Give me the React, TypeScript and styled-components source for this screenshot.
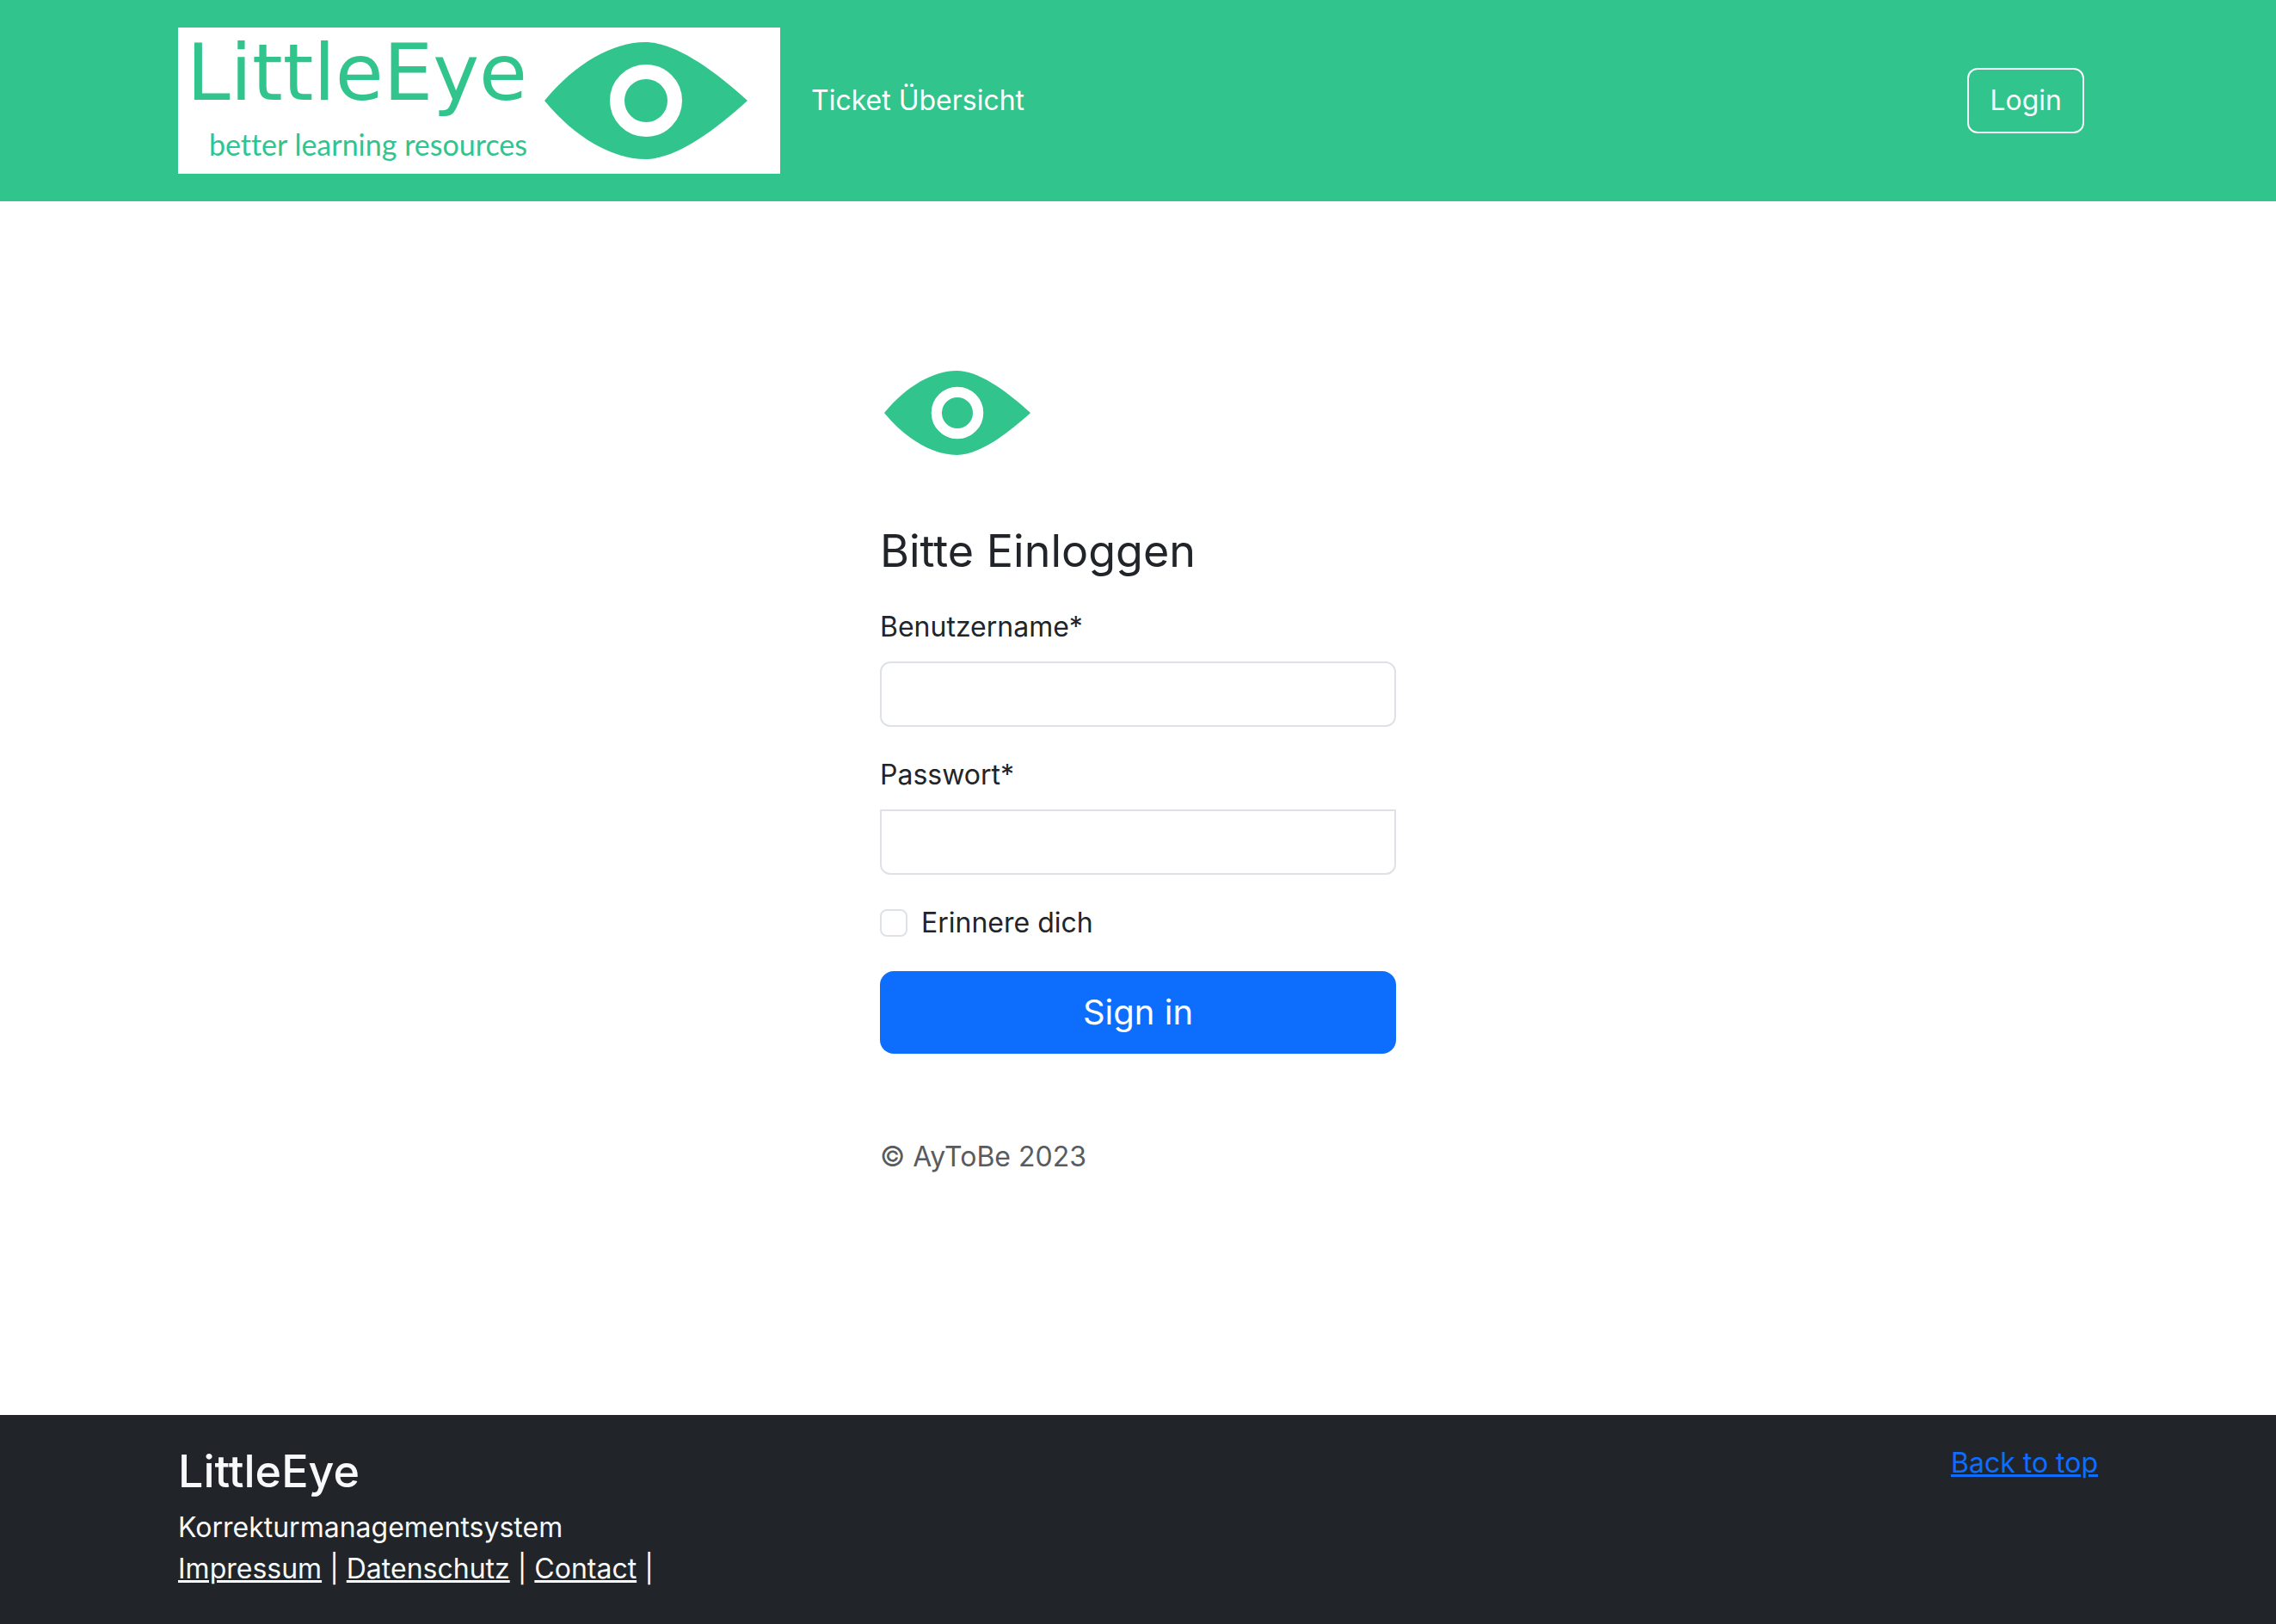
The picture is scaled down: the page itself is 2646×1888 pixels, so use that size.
import React from "react";
import styled, { createGlobalStyle } from "styled-components";

const GREEN = "#31c48d";

const GlobalStyle = createGlobalStyle`
  *, *::before, *::after { box-sizing: border-box; }
  body {
    margin: 0;
    background: #fff;
    color: #212529;
    font-family: Inter, "Liberation Sans", sans-serif;
    font-size: 32px;
    line-height: 48px;
  }
`;

const Page = styled.div`
  display: flex;
  flex-direction: column;
  min-height: 100vh;
`;

const Container = styled.div`
  display: flex;
  width: 100%;
  max-width: 2280px;
  margin: 0 auto;
  padding: 0 24px;
`;

const Header = styled.header`
  padding: 32px 0;
  background: ${GREEN};
`;

const HeaderRow = styled(Container)`
  align-items: center;
`;

const Brand = styled.a`
  display: flex;
  align-items: center;
  gap: 20px;
  width: 700px;
  height: 170px;
  padding: 0 38px 0 20px;
  justify-content: flex-end;
  background: #fff;
  color: ${GREEN};
  text-decoration: none;
`;

const BrandText = styled.span`
  display: flex;
  flex-direction: column;
  align-items: flex-end;
  gap: 16px;
  white-space: nowrap;
`;

const BrandName = styled.span`
  font-family: "DejaVu Sans", sans-serif;
  font-size: 91px;
  line-height: 86px;
`;

const BrandTagline = styled.span`
  font-family: Lato, sans-serif;
  font-size: 34px;
  line-height: 48px;
  font-variant-ligatures: none;
`;

const EyeSvg = styled.svg<{ $width: number }>`
  display: block;
  flex: none;
  width: ${(p) => p.$width}px;
  height: auto;
`;

const Nav = styled.nav`
  flex: 1;
  padding: 0 36px;
`;

const NavLink = styled.a`
  color: #fff;
  text-decoration: none;
`;

const LoginButton = styled.button`
  margin-right: 16px;
  padding: 12px 24px;
  border: 2px solid #f8f9fa;
  border-radius: 12px;
  background: transparent;
  color: #f8f9fa;
  font: inherit;
`;

const Main = styled.main`
  flex: 1;
  padding: 197px 24px 96px;
`;

const Form = styled.form`
  display: flex;
  flex-direction: column;
  width: 100%;
  max-width: 600px;
  margin: 0 auto;
`;

const FormLogo = styled.div`
  padding: 0 5px;
  margin-bottom: 80px;
`;

const Title = styled.h1`
  margin: 0 0 32px;
  font-size: 52px;
  font-weight: 400;
  line-height: 64px;
`;

const Field = styled.div`
  display: flex;
  flex-direction: column;
  gap: 16px;
  margin-bottom: 32px;
`;

const TextInput = styled.input<{ $squareTop?: boolean }>`
  width: 100%;
  height: 76px;
  padding: 12px 24px;
  border: 2px solid #dee2e6;
  border-radius: ${(p) => (p.$squareTop ? "0 0 12px 12px" : "12px")};
  background: #fff;
  color: inherit;
  font: inherit;
`;

const CheckRow = styled.div`
  display: flex;
  align-items: center;
  gap: 16px;
  margin-bottom: 32px;
`;

const Checkbox = styled.input`
  appearance: none;
  width: 32px;
  height: 32px;
  margin: 0;
  border: 2px solid #dee2e6;
  border-radius: 8px;
  background: #fff;
  &:checked { background: #0d6efd; border-color: #0d6efd; }
`;

const SubmitButton = styled.button`
  padding: 18px 32px;
  border: 0;
  border-radius: 16px;
  background: #0d6efd;
  color: #fff;
  font: inherit;
  font-size: 40px;
  line-height: 60px;
`;

const Copyright = styled.p`
  margin: 96px 0 0;
  color: #585c5f;
`;

const Footer = styled.footer`
  padding: 32px 0 40px;
  background: #212529;
  color: #f8f9fa;
`;

const FooterRow = styled(Container)`
  justify-content: space-between;
  align-items: flex-start;
`;

const FooterTitle = styled.h2`
  margin: 0 0 8px;
  font-size: 52px;
  font-weight: 500;
  line-height: 67px;
`;

const FooterText = styled.p`
  margin: 0;
`;

const FooterLink = styled.a<{ $accent?: boolean }>`
  color: ${(p) => (p.$accent ? "#0d6efd" : "#f8f9fa")};
`;

function Eye({ width }: { width: number }) {
  return (
    <EyeSvg $width={width} viewBox="0 0 236 136" aria-hidden="true">
      <path
        fill={GREEN}
        d="M0 68C36 24 80 0 117 0C150 0 192 28 236 68C192 108 150 136 117 136C80 136 36 112 0 68Z"
      />
      <circle cx="118" cy="68" r="33.5" fill="none" stroke="#fff" strokeWidth="17" />
    </EyeSvg>
  );
}

export default function App() {
  return (
    <Page>
      <GlobalStyle />
      <Header>
        <HeaderRow>
          <Brand href="#">
            <BrandText>
              <BrandName>LittleEye</BrandName>
              <BrandTagline>better learning resources</BrandTagline>
            </BrandText>
            <Eye width={236} />
          </Brand>
          <Nav>
            <NavLink href="#">Ticket Übersicht</NavLink>
          </Nav>
          <LoginButton type="button">Login</LoginButton>
        </HeaderRow>
      </Header>

      <Main>
        <Form onSubmit={(e) => e.preventDefault()}>
          <FormLogo>
            <Eye width={170} />
          </FormLogo>
          <Title>Bitte Einloggen</Title>
          <Field>
            <label htmlFor="username">Benutzername*</label>
            <TextInput id="username" type="text" />
          </Field>
          <Field>
            <label htmlFor="password">Passwort*</label>
            <TextInput id="password" type="password" $squareTop />
          </Field>
          <CheckRow>
            <Checkbox id="remember" type="checkbox" />
            <label htmlFor="remember">Erinnere dich</label>
          </CheckRow>
          <SubmitButton type="submit">Sign in</SubmitButton>
          <Copyright>© AyToBe 2023</Copyright>
        </Form>
      </Main>

      <Footer>
        <FooterRow>
          <div>
            <FooterTitle>LittleEye</FooterTitle>
            <FooterText>Korrekturmanagementsystem</FooterText>
            <FooterText>
              <FooterLink href="#">Impressum</FooterLink> |{" "}
              <FooterLink href="#">Datenschutz</FooterLink> |{" "}
              <FooterLink href="#">Contact</FooterLink> |
            </FooterText>
          </div>
          <FooterLink href="#" $accent>Back to top</FooterLink>
        </FooterRow>
      </Footer>
    </Page>
  );
}
